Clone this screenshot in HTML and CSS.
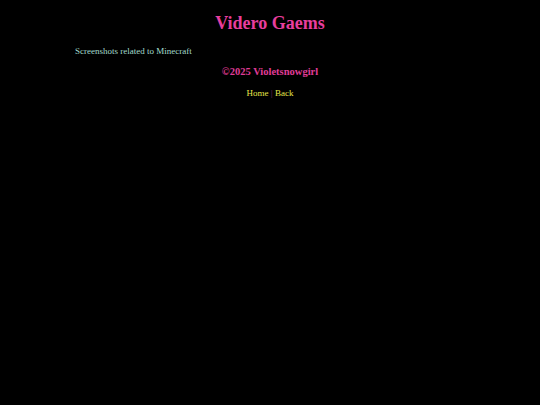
FILE: index.html
```html
<!DOCTYPE html>
<html>
<head>
<meta charset="utf-8">
<title>Videro Gaems</title>
<link rel="stylesheet" href="styles.css">
</head>
<body>
<h1 class="title">Videro Gaems</h1>
<p class="subtitle">Screenshots related to Minecraft</p>
<h3 class="footer">&copy;2025 Violetsnowgirl</h3>
<p class="nav"><a href="#" class="link">Home</a> | <a href="#" class="link">Back</a></p>
</body>
</html>
```

FILE: styles.css
```css
html {
  background: #000;
}
body {
  margin: 0 4.5px;
  padding-top: 0.1px;
  background: #000;
  font-family: "Liberation Serif", "Times New Roman", serif;
  font-size: 9px;
  color: #e83e9e;
}
.title {
  font-size: 2em;
  margin: 12.5px 0 0.67em;
  text-align: center;
  color: #e83e9e;
}
.subtitle {
  margin: 1em 0 1em 70.5px;
  color: #a3dccd;
}
.footer {
  font-size: 1.17em;
  margin: 1em 0;
  text-align: center;
  color: #e03c98;
}
.nav {
  margin: 1em 0;
  text-align: center;
  color: #7a2a6a;
}
.link {
  color: #e6e64a;
  text-decoration: none;
}
```
